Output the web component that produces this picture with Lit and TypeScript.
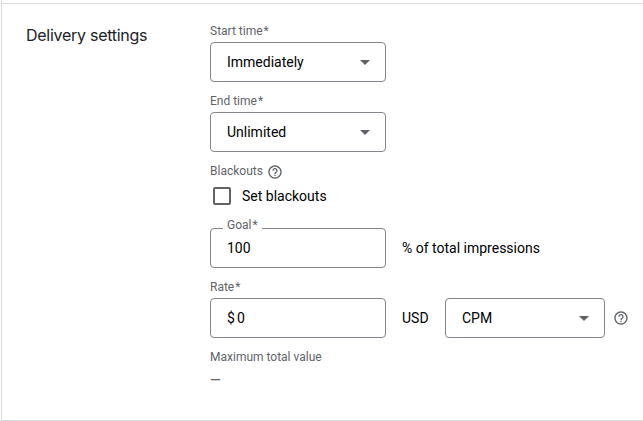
import { LitElement, html, css } from "lit";
import { customElement, property } from "lit/decorators.js";

@customElement("help-icon")
class HelpIcon extends LitElement {
  static styles = css`
    :host { display: block; flex: none; width: 16px; height: 16px; }
    svg { display: block; fill: #5f6368; }
  `;
  render() {
    return html`<svg width="16" height="16" viewBox="0 0 24 24">
      <path d="M11 18h2v-2h-2v2zm1-16C6.48 2 2 6.48 2 12s4.48 10 10 10 10-4.48 10-10S17.52 2 12 2zm0 18c-4.41 0-8-3.59-8-8s3.59-8 8-8 8 3.59 8 8-3.59 8-8 8zm0-14c-2.21 0-4 1.79-4 4h2c0-1.1.9-2 2-2s2 .9 2 2c0 2-3 1.75-3 5h2c0-2.25 3-2.5 3-5 0-2.21-1.79-4-4-4z"/>
    </svg>`;
  }
}

@customElement("outlined-box")
class OutlinedBox extends LitElement {
  @property() value = "";
  @property() prefixText = "";
  @property() label = "";
  @property({ type: Boolean }) menu = false;

  static styles = css`
    :host { display: block; flex: none; width: 176px; height: 40px; }
    .box {
      position: relative; box-sizing: border-box; height: 40px; display: flex; align-items: center;
      padding: 0 15px 0 16px; border: 1px solid #80868b; border-radius: 4px; color: #000;
    }
    .value { flex: 1; }
    .prefix { margin-right: 2px; }
    .arrow { display: block; fill: #5f6368; }
    .floating {
      position: absolute; left: 12px; top: -12px; padding: 0 4px; background: #fff;
      font-size: 12px; line-height: 16px; color: #5f6368;
    }
    .star { margin-left: 1px; }
  `;
  render() {
    return html`<div class="box">
      ${this.label ? html`<span class="floating">${this.label}<span class="star">*</span></span>` : ""}
      ${this.prefixText ? html`<span class="prefix">${this.prefixText}</span>` : ""}
      <span class="value">${this.value}</span>
      ${this.menu
        ? html`<svg class="arrow" width="10" height="5" viewBox="0 0 10 5"><path d="M0 0h10L5 5z"/></svg>`
        : ""}
    </div>`;
  }
}

@customElement("app-root")
class AppRoot extends LitElement {
  static styles = css`
    :host {
      display: block; height: 421px; overflow: hidden; background: #fff; color: #000;
      font: 14px/20px Roboto, sans-serif;
    }
    .frame { box-sizing: border-box; height: 421px; margin-left: 1px; padding-top: 3px; border-left: 1px solid #dadce0; border-bottom: 1px solid #dadce0; }
    .panel { box-sizing: border-box; height: 417px; border-top: 1px solid #dadce0; display: grid; grid-template-columns: 184px 1fr; padding: 19px 0 0 24px; }
    .title { margin: 0; font: 400 16px/24px Inter, sans-serif; letter-spacing: -0.27px; color: #202124; }
    .label { display: flex; align-items: center; height: 16px; font-size: 12px; line-height: 16px; color: #5f6368; }
    .star { margin-left: 1px; }
    .field { height: 59px; margin-bottom: 11px; }
    .field .label { margin-bottom: 3px; }
    .row { display: flex; align-items: center; }
    .blackouts { gap: 4px; }
    .blackouts help-icon { margin-top: 2px; }
    .check { height: 18px; margin: 8px 0 23px 3px; gap: 11px; }
    .tick { box-sizing: border-box; width: 18px; height: 18px; border: 2px solid #5f6368; border-radius: 2px; }
    .goal { gap: 16px; margin-bottom: 11px; }
    .rate-label { margin-bottom: 3px; }
    .unit { width: 43px; margin-left: 16px; }
    .mode { width: 160px; margin-right: 7.5px; }
    .max { margin-top: 11px; }
    .dash { margin-top: 5px; font-weight: 500; color: #5f6368; }
  `;
  render() {
    const star = html`<span class="star">*</span>`;
    return html`<div class="frame"><section class="panel">
      <h2 class="title">Delivery settings</h2>
      <div class="fields">
        <div class="field"><div class="label">Start time${star}</div><outlined-box value="Immediately" menu></outlined-box></div>
        <div class="field"><div class="label">End time${star}</div><outlined-box value="Unlimited" menu></outlined-box></div>
        <div class="label blackouts">Blackouts <help-icon></help-icon></div>
        <div class="row check"><span class="tick"></span><span>Set blackouts</span></div>
        <div class="row goal"><outlined-box label="Goal" value="100"></outlined-box><span>% of total impressions</span></div>
        <div class="label rate-label">Rate${star}</div>
        <div class="row"><outlined-box prefixText="$" value="0"></outlined-box><span class="unit">USD</span><outlined-box class="mode" value="CPM" menu></outlined-box><help-icon></help-icon></div>
        <div class="label max">Maximum total value</div>
        <div class="dash">—</div>
      </div>
    </section></div>`;
  }
}
